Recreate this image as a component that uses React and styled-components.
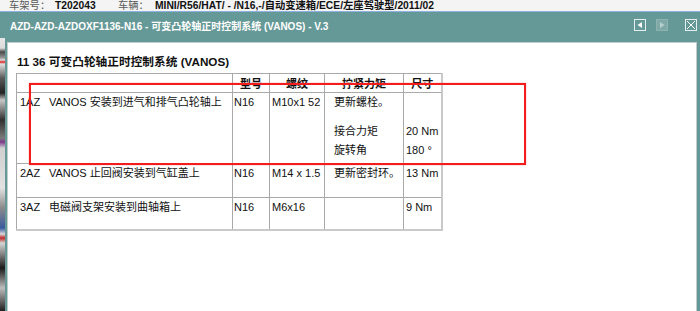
import React from "react";
import styled, { createGlobalStyle } from "styled-components";

const Global = createGlobalStyle`
  html, body {
    margin: 0;
    padding: 0;
    background: #ffffff;
  }
  body {
    font-family: "Liberation Sans", Arial, "Noto Sans CJK SC", sans-serif;
    overflow: hidden;
  }
`;

const Screen = styled.div`
  position: relative;
  width: 700px;
  height: 311px;
  overflow: hidden;
  display: flex;
  flex-direction: column;
  background: #ffffff;
`;

const InfoBar = styled.div`
  flex: none;
  height: 11px;
  display: flex;
  align-items: center;
  padding-left: 9px;
  background: #f4f4f4;
  border-bottom: 1px solid #8eb0de;
  overflow: hidden;
  font-size: 10.3px;
  line-height: 12px;
  white-space: nowrap;
`;

const InfoLabel = styled.span`
  width: ${(p) => p.$w}px;
  flex: none;
  color: #5a5a5a;
`;

const InfoValue = styled.span`
  width: ${(p) => (p.$w ? `${p.$w}px` : "auto")};
  flex: none;
  color: #111;
  font-weight: bold;
`;

const TitleBar = styled.div`
  flex: none;
  height: 26px;
  display: flex;
  align-items: center;
  padding: 0 3px 0 10px;
  background: #659997;
  color: #ffffff;
  font-size: 10px;
  font-weight: bold;
  white-space: nowrap;
`;

const TitleText = styled.div`
  flex: 1;
`;

const NavButton = styled.div`
  width: 10px;
  height: 10px;
  margin-left: ${(p) => p.$gap}px;
  border: 1px solid ${(p) => (p.$disabled ? "#8db3b1" : "#e4efee")};
  background: ${(p) => (p.$disabled ? "#7fa9a7" : "transparent")};
  display: grid;
  place-items: center;
`;

const Body = styled.div`
  flex: 1;
  min-height: 0;
  display: flex;
`;

const BackStrip = styled.div`
  width: 5px;
  flex: none;
  background: linear-gradient(
    to bottom,
    #e6e6e6 0px,
    #dcdcdc 10px,
    #4a4a4a 14px,
    #9a9a9a 20px,
    #e0e0e0 22px,
    #d22 24px,
    #e0e0e0 26px,
    #5a5a5a 40px,
    #222 55px,
    #c8c8c8 62px,
    #303030 82px,
    #7a7a7a 100px,
    #7d3a8a 104px,
    #d0d0d0 110px,
    #e2e2e2 150px,
    #8a8a8a 170px,
    #3a5aa0 190px,
    #d8d8d8 196px,
    #c02a2a 200px,
    #d6d6d6 205px,
    #1a1a1a 230px,
    #bdbdbd 250px,
    #202020 273px
  );
`;

const Frame = styled.div`
  flex: 1;
  display: flex;
  padding: 4px 3px 0 2px;
  background: #659997;
`;

const Panel = styled.div`
  flex: 1;
  background: #ffffff;
  border: 1px solid #c2cccb;
  border-bottom: none;
  padding-left: 8px;
`;

const Heading = styled.div`
  margin: 11px 0 3px 1px;
  font-size: 11.7px;
  font-weight: bold;
  line-height: 16px;
  color: #111;
`;

const Table = styled.table`
  border-collapse: collapse;
  table-layout: fixed;
  width: 426px;
  font-size: 11px;
  color: #111;
  border-top: 1px solid #a9a9a9;
  border-left: 1px solid #a9a9a9;
  border-right: 2px solid #c9c9c9;
  border-bottom: 2px solid #c9c9c9;
`;

const HeadCell = styled.th`
  height: 16px;
  padding: 2px 0 0;
  border: 1px solid #a9a9a9;
  text-align: center;
  vertical-align: middle;
  font-weight: bold;
  line-height: 15px;
`;

const Row = styled.tr`
  height: ${(p) => p.$h}px;
`;

const Cell = styled.td`
  padding: 0 0 0 ${(p) => p.$indent || 1}px;
  border: 1px solid #a9a9a9;
  vertical-align: top;
  line-height: 19px;
  white-space: nowrap;
`;

const Code = styled.span`
  display: inline-block;
  width: 29px;
`;

const Line = styled.div`
  margin-top: ${(p) => p.$gap || 0}px;
`;

const Highlight = styled.div`
  position: absolute;
  left: 29px;
  top: 83px;
  width: 493px;
  height: 78px;
  border: 2px solid #f31d1d;
  box-shadow: 0 0 1px rgba(255, 40, 40, 0.7);
  pointer-events: none;
`;

const ArrowLeft = () => (
  <svg width="8" height="8" viewBox="0 0 8 8">
    <path d="M6 1 L1.5 4 L6 7 Z" fill="#ffffff" />
  </svg>
);

const ArrowRight = () => (
  <svg width="8" height="8" viewBox="0 0 8 8">
    <path d="M2 1 L6.5 4 L2 7 Z" fill="#b6cfcd" />
  </svg>
);

const CloseIcon = () => (
  <svg width="10" height="10" viewBox="0 0 10 10">
    <path d="M1 1 L9 9 M9 1 L1 9" stroke="#ffffff" strokeWidth="1" />
  </svg>
);

const rows = [
  {
    code: "1AZ",
    text: "VANOS 安装到进气和排气凸轮轴上",
    model: "N16",
    thread: "M10x1 52",
    h: 71,
    torque: [
      { t: "更新螺栓。" },
      { t: "接合力矩", gap: 10 },
      { t: "旋转角" },
    ],
    size: [{ t: "20 Nm", gap: 29 }, { t: "180 °" }],
  },
  {
    code: "2AZ",
    text: "VANOS 止回阀安装到气缸盖上",
    model: "N16",
    thread: "M14 x 1.5",
    h: 34,
    torque: [{ t: "更新密封环。" }],
    size: [{ t: "13 Nm" }],
  },
  {
    code: "3AZ",
    text: "电磁阀支架安装到曲轴箱上",
    model: "N16",
    thread: "M6x16",
    h: 32,
    torque: [],
    size: [{ t: "9 Nm" }],
  },
];

export default function App() {
  return (
    <Screen>
      <Global />
      <InfoBar>
        <InfoLabel $w={46}>车架号：</InfoLabel>
        <InfoValue $w={63}>T202043</InfoValue>
        <InfoLabel $w={37}>车辆：</InfoLabel>
        <InfoValue>MINI/R56/HAT/ - /N16,-/自动变速箱/ECE/左座驾驶型/2011/02</InfoValue>
      </InfoBar>
      <TitleBar>
        <TitleText>AZD-AZD-AZDOXF1136-N16 - 可变凸轮轴正时控制系统 (VANOS) - V.3</TitleText>
        <NavButton $gap={0}>
          <ArrowLeft />
        </NavButton>
        <NavButton $gap={10} $disabled>
          <ArrowRight />
        </NavButton>
        <NavButton $gap={17}>
          <CloseIcon />
        </NavButton>
      </TitleBar>
      <Body>
        <BackStrip />
        <Frame>
          <Panel>
            <Heading>11 36 可变凸轮轴正时控制系统 (VANOS)</Heading>
            <Table>
              <colgroup>
                <col style={{ width: 216 }} />
                <col style={{ width: 37 }} />
                <col style={{ width: 55 }} />
                <col style={{ width: 79 }} />
                <col style={{ width: 38 }} />
              </colgroup>
              <thead>
                <tr>
                  <HeadCell />
                  <HeadCell>型号</HeadCell>
                  <HeadCell>螺纹</HeadCell>
                  <HeadCell>拧紧力矩</HeadCell>
                  <HeadCell>尺寸</HeadCell>
                </tr>
              </thead>
              <tbody>
                {rows.map((r) => (
                  <Row key={r.code} $h={r.h}>
                    <Cell $indent={3}>
                      <Code>{r.code}</Code>
                      {r.text}
                    </Cell>
                    <Cell>{r.model}</Cell>
                    <Cell $indent={2}>{r.thread}</Cell>
                    <Cell $indent={9}>
                      {r.torque.map((l) => (
                        <Line key={l.t} $gap={l.gap}>
                          {l.t}
                        </Line>
                      ))}
                    </Cell>
                    <Cell $indent={2}>
                      {r.size.map((l) => (
                        <Line key={l.t} $gap={l.gap}>
                          {l.t}
                        </Line>
                      ))}
                    </Cell>
                  </Row>
                ))}
              </tbody>
            </Table>
          </Panel>
        </Frame>
      </Body>
      <Highlight />
    </Screen>
  );
}
